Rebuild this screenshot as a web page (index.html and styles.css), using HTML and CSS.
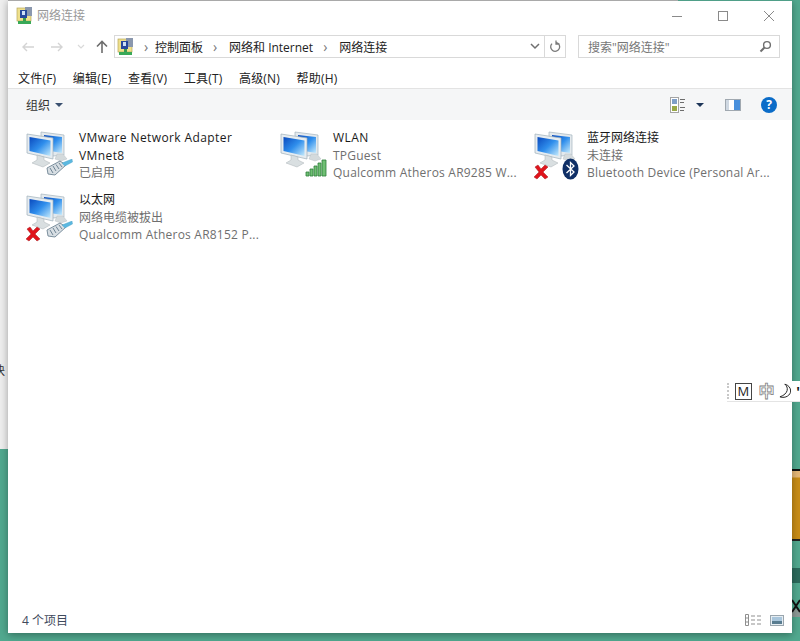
FILE: index.html
```html
<!DOCTYPE html>
<html lang="zh-CN">
<head>
    <meta charset="UTF-8">
    <title>网络连接</title>
    <link rel="stylesheet" href="styles.css">
</head>
<body>
    <svg class="defs" width="0" height="0">
        <defs>
            <linearGradient id="screen" x1="0" y1="0" x2="1" y2="1">
                <stop offset="0" stop-color="#0a49bd"/>
                <stop offset="0.5" stop-color="#2f8eec"/>
                <stop offset="1" stop-color="#c6ebfc"/>
            </linearGradient>
            <symbol id="folder-net" viewBox="0 0 18 18">
                <rect x="1" y="1" width="14" height="13" fill="#efe08c" stroke="#b7a65a" stroke-width="0.7"/>
                <rect x="9" y="0" width="7" height="9" fill="#8a97ad"/>
                <rect x="4" y="3" width="7" height="8" fill="#27489c"/>
                <rect x="6" y="4" width="3" height="4" fill="#cfe0f6"/>
                <rect x="7" y="11" width="3" height="3" fill="#3a9a4f"/>
                <rect x="2" y="14" width="13" height="3" fill="#39a957"/>
            </symbol>
            <symbol id="monitors" viewBox="0 0 48 48">
                <path d="M15 4 38 7V27L27 28 15 24Z" fill="#e3e9ed" stroke="#a5b4be" stroke-width="0.7"/>
                <path d="M18 7 36 9V25L18 22Z" fill="url(#screen)"/>
                <path d="M31 26h6l4 5-6 2-6-2Z" fill="#d4dadc" stroke="#b3bcc0" stroke-width="0.4"/>
                <path d="M1 6 27 10V31L1 25Z" fill="#e6ecf0" stroke="#9fb0ba" stroke-width="0.7"/>
                <path d="M3.5 9 24.5 12.5V28L3.5 23Z" fill="url(#screen)"/>
                <path d="M11 27 18 29V32L24 35 17 39 6 35 11 32Z" fill="#d9dfe1" stroke="#aab3b7" stroke-width="0.5"/>
            </symbol>
            <symbol id="plug" viewBox="0 0 28 18">
                <path d="M2 9 15 2 21 6 10 16 3 15Z" fill="#d7dee3" stroke="#6f8494" stroke-width="0.9"/>
                <path d="M5 9 8 14M8 7 11 12M11 5.500 14 10M14 4 17 8" stroke="#6f8494" stroke-width="1"/>
                <path d="M17 4 27 0 27.500 3 20 7Z" fill="#5bb8e0" stroke="#4a9fc6" stroke-width="0.4"/>
            </symbol>
            <symbol id="cross" viewBox="0 0 16 16">
                <path d="M2 3 5 1 8 5 12 1 15 3 10 8 15 13 12 15 8 11 4 15 1 13 6 8Z" fill="#e0141c" stroke="#a51a1f" stroke-width="0.5"/>
            </symbol>
        </defs>
    </svg>

    <div class="desktop-left"><span class="peek">块</span></div>
    <div class="desktop-right">
        <div class="wallpaper-orange"></div>
        <div class="wallpaper-dark"></div>
        <svg class="wallpaper-x" width="8" height="18" viewBox="0 0 8 18">
            <rect y="10" width="8" height="8" fill="#8d9a96"/>
            <path d="M0 1 8 13M8 1 0 13" stroke="#111" stroke-width="2"/>
        </svg>
    </div>

    <div class="window">
        <div class="titlebar">
            <svg class="app-icon" width="18" height="18"><use href="#folder-net"/></svg>
            <span class="title">网络连接</span>
            <div class="win-buttons">
                <svg width="12" height="12" viewBox="0 0 12 12"><path d="M1 6.5H11" stroke="#8a8a8a"/></svg>
                <svg width="12" height="12" viewBox="0 0 12 12"><rect x="1.5" y="1.5" width="9" height="9" fill="none" stroke="#8a8a8a"/></svg>
                <svg width="12" height="12" viewBox="0 0 12 12"><path d="M1 1 11 11M11 1 1 11" stroke="#8a8a8a"/></svg>
            </div>
        </div>

        <div class="navbar">
            <div class="nav-arrows">
                <svg width="14" height="12" viewBox="0 0 14 12"><path d="M13 6H2M6 2 2 6 6 10" fill="none" stroke="#d4d4d4" stroke-width="1.4"/></svg>
                <svg width="14" height="12" viewBox="0 0 14 12"><path d="M1 6H12M8 2 12 6 8 10" fill="none" stroke="#d4d4d4" stroke-width="1.4"/></svg>
                <svg class="nav-down" width="8" height="6" viewBox="0 0 8 6"><path d="M1 1 4 4 7 1" fill="none" stroke="#d9d9d9" stroke-width="1.2"/></svg>
                <svg width="12" height="13" viewBox="0 0 12 13"><path d="M6 13V2M1 6.5 6 1.5 11 6.5" fill="none" stroke="#6d6d6d" stroke-width="1.6"/></svg>
            </div>
            <div class="address">
                <svg class="addr-icon" width="18" height="18"><use href="#folder-net"/></svg>
                <span class="sep">›</span>
                <span>控制面板</span>
                <span class="sep">›</span>
                <span>网络和 Internet</span>
                <span class="sep">›</span>
                <span>网络连接</span>
                <svg class="addr-drop" width="10" height="7" viewBox="0 0 10 7"><path d="M1 1 5 5 9 1" fill="none" stroke="#6f6f6f" stroke-width="1.5"/></svg>
                <div class="refresh">
                    <svg width="12" height="13" viewBox="0 0 12 13"><path d="M7.5 2.5A4.5 4.5 0 1 1 3 3.6M7 .5V4H10.5" fill="none" stroke="#7a7a7a" stroke-width="1.3"/></svg>
                </div>
            </div>
            <div class="search">
                <span>搜索"网络连接"</span>
                <svg width="13" height="13" viewBox="0 0 13 13"><circle cx="8" cy="5" r="3.4" fill="none" stroke="#6f6f6f" stroke-width="1.4"/><path d="M5.5 7.5 1.5 11.5" stroke="#6f6f6f" stroke-width="2"/></svg>
            </div>
        </div>

        <div class="menubar">
            <span>文件(F)</span>
            <span>编辑(E)</span>
            <span>查看(V)</span>
            <span>工具(T)</span>
            <span>高级(N)</span>
            <span>帮助(H)</span>
        </div>

        <div class="toolbar">
            <span class="organize">组织</span>
            <span class="caret"></span>
            <div class="tool-right">
                <svg width="16" height="16" viewBox="0 0 16 16">
                    <rect x=".5" y=".5" width="8" height="15" fill="#fff" stroke="#a4a4a4"/>
                    <rect x="2" y="2" width="5" height="5" fill="#7f9fc8"/>
                    <rect x="2" y="9" width="5" height="5" fill="#9aa948"/>
                    <path d="M10 2.5H15M10 5.5H14M10 10.5H15M10 13.5H14" stroke="#6d6d6d"/>
                </svg>
                <span class="caret dark"></span>
                <svg class="pane-icon" width="16" height="12" viewBox="0 0 16 12">
                    <rect x=".5" y=".5" width="15" height="11" fill="#fff" stroke="#a0a8b0"/>
                    <rect x="9" y="1" width="6" height="10" fill="#4a90dc"/>
                    <rect x="1" y="1" width="3" height="10" fill="#cfd8e2"/>
                </svg>
                <span class="help">?</span>
            </div>
        </div>

        <div class="items">
            <div class="item">
                <div class="item-icon">
                    <svg class="monitors"><use href="#monitors"/></svg>
                    <svg class="plug"><use href="#plug"/></svg>
                </div>
                <div class="item-text">
                    <div class="name latin">VMware Network Adapter<br>VMnet8</div>
                    <div class="info">已启用</div>
                </div>
            </div>
            <div class="item">
                <div class="item-icon">
                    <svg class="monitors"><use href="#monitors"/></svg>
                    <svg class="signal" width="22" height="18" viewBox="0 0 22 18">
                        <path d="M1 13h3v4H1ZM5 10h3v7H5ZM9 7h3v10H9ZM13 4h3v13h-3ZM17 1h4v16h-4Z" fill="#6fbf73" stroke="#2f7d3a" stroke-width="0.8"/>
                    </svg>
                </div>
                <div class="item-text">
                    <div class="name latin">WLAN</div>
                    <div class="info latin">TPGuest</div>
                    <div class="info latin">Qualcomm Atheros AR9285 W...</div>
                </div>
            </div>
            <div class="item">
                <div class="item-icon">
                    <svg class="monitors"><use href="#monitors"/></svg>
                    <svg class="cross"><use href="#cross"/></svg>
                    <svg class="bluetooth" width="17" height="22" viewBox="0 0 17 22">
                        <ellipse cx="8.5" cy="11" rx="8" ry="10.5" fill="#0f2f66"/>
                        <path d="M4.5 7 12 14 8.5 17.5V4.5L12 8 4.5 15" fill="none" stroke="#fff" stroke-width="1.3"/>
                    </svg>
                </div>
                <div class="item-text">
                    <div class="name">蓝牙网络连接</div>
                    <div class="info">未连接</div>
                    <div class="info latin">Bluetooth Device (Personal Ar...</div>
                </div>
            </div>
            <div class="item">
                <div class="item-icon">
                    <svg class="monitors"><use href="#monitors"/></svg>
                    <svg class="cross"><use href="#cross"/></svg>
                    <svg class="plug"><use href="#plug"/></svg>
                </div>
                <div class="item-text">
                    <div class="name">以太网</div>
                    <div class="info">网络电缆被拔出</div>
                    <div class="info latin">Qualcomm Atheros AR8152 P...</div>
                </div>
            </div>
        </div>

        <div class="statusbar">
            <span>4 个项目</span>
            <div class="view-icons">
                <svg width="17" height="12" viewBox="0 0 17 12">
                    <path d="M.5.5h3v11h-3ZM.5 4h3M.5 8h3M6 2H10M12 2H16M6 6H10M12 6H16M6 10H10M12 10H16" fill="#fff" stroke="#8f8f8f"/>
                </svg>
                <svg width="14" height="11" viewBox="0 0 14 11">
                    <rect x=".5" y=".5" width="13" height="10" fill="#e6edf2" stroke="#9aa6ae"/>
                    <rect x="2" y="2" width="10" height="4" fill="#a9c6dc"/>
                    <rect x="2" y="6" width="10" height="3" fill="#587c90"/>
                </svg>
            </div>
        </div>
    </div>

    <div class="ime-bar">
        <span class="ime-dots"></span>
        <span class="ime-m">M</span>
        <span class="ime-zh">中</span>
        <svg width="14" height="16" viewBox="0 0 14 16"><path d="M7 1C11 4 11 11 2 14 8 16 13 12 13 8 13 5 11 2 7 1Z" fill="#fff" stroke="#222"/></svg>
        <span class="ime-more">'</span>
    </div>
</body>
</html>
```

FILE: styles.css
```css
html, body {
    margin: 0;
    height: 641px;
    overflow: hidden;
}
body {
    position: relative;
    background-color: #51a98f;
    font-family: "Open Sans", "Noto Sans CJK SC", sans-serif;
    font-size: 12px;
    color: #222;
}
.defs {
    position: absolute;
}

/* stuff showing behind the window */
.desktop-left {
    position: absolute;
    left: 0;
    top: 0;
    width: 8px;
    height: 449px;
    background-color: #efefef;
    overflow: hidden;
}
.peek {
    position: absolute;
    left: -7px;
    top: 361px;
    font-size: 12px;
    color: #333;
}
.desktop-right {
    position: absolute;
    left: 792px;
    top: 0;
    width: 8px;
    height: 641px;
    overflow: hidden;
}
.wallpaper-orange {
    position: absolute;
    top: 469px;
    width: 8px;
    height: 72px;
    box-sizing: border-box;
    border-top: 2px solid #111;
    border-bottom: 2px solid #222;
    background: linear-gradient(#e6b878 0, #e6b878 6px, #c98d17 7px);
}
.wallpaper-dark {
    position: absolute;
    top: 568px;
    width: 8px;
    height: 15px;
    background-color: #2c6b5c;
}
.wallpaper-x {
    position: absolute;
    top: 599px;
    left: 0;
}

.window {
    position: absolute;
    left: 8px;
    top: 0;
    width: 784px;
    height: 633px;
    display: flex;
    flex-direction: column;
    background-color: #fff;
    border-top: 1px solid;
    border-image: linear-gradient(to right, #a9a9a9 669px, #4f9f88 669px) 1;
    box-sizing: border-box;
    box-shadow: 0 2px 8px rgba(0, 0, 0, 0.35);
}

.titlebar {
    height: 29px;
    display: flex;
    align-items: center;
    padding-left: 8px;
}
.app-icon {
    margin-right: 3px;
}
.title {
    font-size: 12px;
    color: #999;
    margin-bottom: 2px;
}
.win-buttons {
    margin-left: auto;
    display: flex;
    gap: 34px;
    padding-right: 17px;
}

.navbar {
    height: 23px;
    margin-top: 5px;
    display: flex;
    align-items: center;
}
.nav-arrows {
    width: 106px;
    padding-left: 13px;
    box-sizing: border-box;
    display: flex;
    align-items: center;
    gap: 15px;
}
.nav-down {
    margin-left: -2px;
    margin-right: -4px;
}
.address {
    width: 452px;
    height: 23px;
    box-sizing: border-box;
    border: 1px solid #d9d9d9;
    display: flex;
    align-items: center;
    font-size: 12px;
    color: #222;
    padding-left: 2px;
}
.addr-icon {
    margin-right: 6px;
}
.sep {
    width: 16px;
    padding-left: 3px;
    color: #777;
    font-size: 14px;
    line-height: 14px;
}
.address .sep:first-of-type {
    width: 11px;
}
.address span:not(.sep) {
    margin-right: 7px;
}
.addr-drop {
    margin-left: auto;
    margin-right: 4px;
}
.refresh {
    width: 20px;
    height: 21px;
    border-left: 1px solid #d9d9d9;
    display: flex;
    align-items: center;
    justify-content: center;
}
.search {
    width: 202px;
    height: 23px;
    margin-left: 12px;
    box-sizing: border-box;
    border: 1px solid #d9d9d9;
    display: flex;
    align-items: center;
    justify-content: space-between;
    padding: 0 7px 0 9px;
    color: #777;
}

.menubar {
    height: 21px;
    margin-top: 9px;
    display: flex;
    align-items: center;
    gap: 16.5px;
    padding-left: 10px;
    color: #222;
    letter-spacing: 0.2px;
}

.toolbar {
    height: 32px;
    display: flex;
    align-items: center;
    background-color: #f5f6f7;
    border-top: 1px solid #e3e3e3;
    box-sizing: border-box;
    padding-left: 18px;
    padding-right: 15px;
}
.organize {
    color: #333;
}
.caret {
    width: 0;
    height: 0;
    margin-left: 5px;
    border-left: 4px solid transparent;
    border-right: 4px solid transparent;
    border-top: 4px solid #3a5070;
}
.tool-right {
    margin-left: auto;
    display: flex;
    align-items: center;
}
.caret.dark {
    margin-left: 10px;
    border-top-color: #1d3558;
}
.pane-icon {
    margin-left: 21px;
}
.help {
    margin-left: 20px;
    width: 16px;
    height: 16px;
    border-radius: 50%;
    background-color: #0b6cc8;
    color: #fff;
    font-weight: bold;
    font-size: 12px;
    line-height: 16px;
    text-align: center;
}

.items {
    flex: 1;
    display: grid;
    grid-template-columns: repeat(3, 254px);
    grid-auto-rows: 62px;
    align-content: start;
    padding: 8px 0 0 18px;
}
.item {
    display: flex;
}
.item-icon {
    position: relative;
    width: 48px;
    height: 50px;
    margin-right: 5px;
    flex-shrink: 0;
}
.monitors {
    width: 48px;
    height: 48px;
}
.plug {
    position: absolute;
    left: 19px;
    top: 31px;
    width: 28px;
    height: 18px;
}
.signal {
    position: absolute;
    left: 25px;
    top: 31px;
}
.cross {
    position: absolute;
    left: -1px;
    top: 36px;
    width: 16px;
    height: 16px;
}
.bluetooth {
    position: absolute;
    left: 28px;
    top: 30px;
}
.item-text {
    padding-top: 1px;
    line-height: 17.5px;
    font-size: 12px;
    white-space: nowrap;
}
.name {
    color: #1a1a1a;
}
.info {
    color: #6f6f6f;
}
.latin {
    letter-spacing: 0.22px;
}
.name.latin {
    letter-spacing: 0.4px;
}

.statusbar {
    height: 26px;
    display: flex;
    align-items: center;
    justify-content: space-between;
    padding: 0 8px 0 14px;
    color: #3f4a5c;
}
.view-icons {
    display: flex;
    align-items: center;
    gap: 8px;
}

/* input method bar floats over everything */
.ime-bar {
    position: absolute;
    left: 727px;
    top: 381px;
    width: 73px;
    height: 20px;
    display: flex;
    align-items: center;
    background-color: #fff;
    border-bottom: 1px solid #e4e4e4;
    overflow: hidden;
}
.ime-dots {
    height: 16px;
    margin-right: 6px;
    border-left: 2px dotted #c8c8c8;
}
.ime-m {
    width: 15px;
    height: 15px;
    margin-right: 7px;
    border: 1px solid #444;
    font-size: 13px;
    line-height: 15px;
    text-align: center;
}
.ime-zh {
    font-size: 16px;
    font-weight: bold;
    color: #fff;
    -webkit-text-stroke: 0.8px #808080;
    margin-right: 3px;
    line-height: 16px;
}
.ime-more {
    margin-left: 5px;
    font-size: 14px;
    font-weight: bold;
    color: #111;
}
```
